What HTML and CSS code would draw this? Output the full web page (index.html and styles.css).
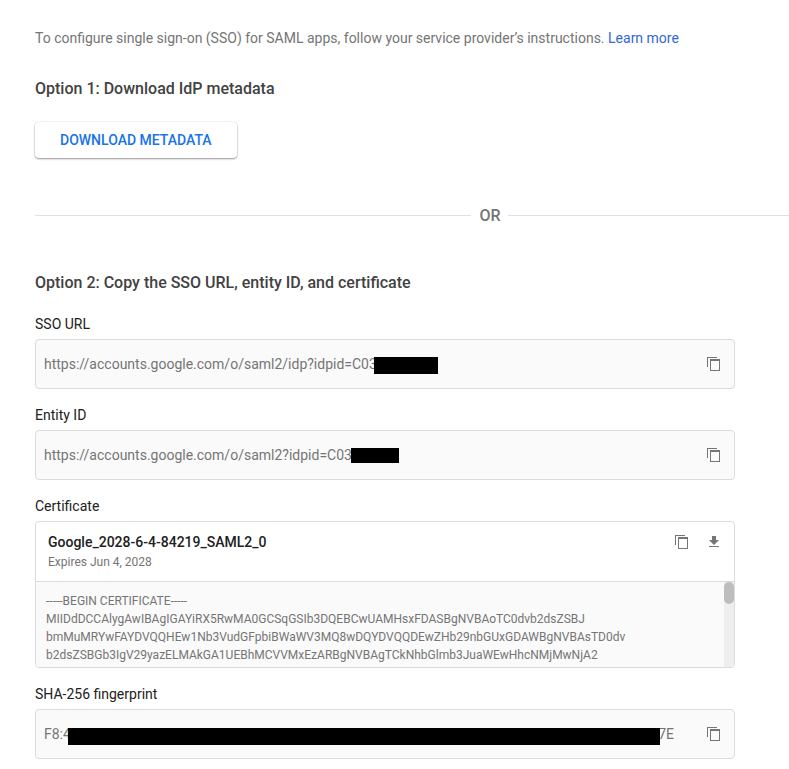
FILE: index.html
```html
<!DOCTYPE html>
<html lang="en">
<head>
<meta charset="utf-8">
<meta name="viewport" content="width=device-width, initial-scale=1">
<title>Single sign-on for SAML apps</title>
<link rel="stylesheet" href="styles.css">
</head>
<body>
<svg class="sprite" aria-hidden="true">
  <symbol id="copy" viewBox="0 0 14 14">
    <path d="M0 0h10v1H1v9H0zM3 2h10v12H3zM4 4v9h8V4z" fill-rule="evenodd"/>
  </symbol>
  <symbol id="download" viewBox="0 0 14 14">
    <path d="M5 1h4v4h3L7 10 2 5h3zM2 11h10v1H2z"/>
  </symbol>
</svg>
<main class="page">
  <p class="intro">To configure single sign-on (SSO) for SAML apps, follow your service provider’s instructions. <a href="#learn">Learn more</a></p>

  <section class="option">
    <h2>Option 1: Download IdP metadata</h2>
    <button class="download" type="button">DOWNLOAD METADATA</button>
  </section>

  <div class="divider"><span>OR</span></div>

  <section class="option details">
    <h2>Option 2: Copy the SSO URL, entity ID, and certificate</h2>

    <div class="group">
      <h3>SSO URL</h3>
      <div class="field">
        <span class="value">https://accounts.google.com/o/saml2/idp?idpid=C03<span class="redacted redacted-url"></span></span>
        <button class="icon" type="button" aria-label="Copy"><svg><use href="#copy"/></svg></button>
      </div>
    </div>

    <div class="group">
      <h3>Entity ID</h3>
      <div class="field">
        <span class="value">https://accounts.google.com/o/saml2?idpid=C03<span class="redacted redacted-id"></span></span>
        <button class="icon" type="button" aria-label="Copy"><svg><use href="#copy"/></svg></button>
      </div>
    </div>

    <div class="group">
      <h3>Certificate</h3>
      <div class="certificate">
        <div class="cert-head">
          <div class="cert-info">
            <div class="cert-name">Google_2028-6-4-84219_SAML2_0</div>
            <div class="cert-expiry">Expires Jun 4, 2028</div>
          </div>
          <button class="icon" type="button" aria-label="Copy"><svg><use href="#copy"/></svg></button>
          <button class="icon" type="button" aria-label="Download"><svg><use href="#download"/></svg></button>
        </div>
        <div class="cert-body">
          <div class="cert-text">-----BEGIN CERTIFICATE-----<br>MIIDdDCCAlygAwIBAgIGAYiRX5RwMA0GCSqGSIb3DQEBCwUAMHsxFDASBgNVBAoTC0dvb2dsZSBJ<br>bmMuMRYwFAYDVQQHEw1Nb3VudGFpbiBWaWV3MQ8wDQYDVQQDEwZHb29nbGUxGDAWBgNVBAsTD0dv<br>b2dsZSBGb3IgV29yazELMAkGA1UEBhMCVVMxEzARBgNVBAgTCkNhbGlmb3JuaWEwHhcNMjMwNjA2</div>
          <div class="track"><div class="thumb"></div></div>
        </div>
      </div>
    </div>

    <div class="group">
      <h3>SHA-256 fingerprint</h3>
      <div class="field">
        <span class="value fingerprint">F8:4<span class="redacted redacted-sha"></span>7E</span>
        <button class="icon" type="button" aria-label="Copy"><svg><use href="#copy"/></svg></button>
      </div>
    </div>
  </section>
</main>
</body>
</html>
```
FILE: styles.css
```css
* {
  box-sizing: border-box;
}

body {
  margin: 0;
  background: #fff;
  color: #757575;
  font: 14px/20px Roboto, "Liberation Sans", sans-serif;
}

.sprite {
  display: none;
}

.page {
  padding: 28px 0 10px 35px;
}

.intro {
  margin: 0 0 29px;
}

a {
  color: #3367d6;
  text-decoration: none;
}

h2 {
  margin: 0;
  color: #424242;
  font-size: 16px;
  font-weight: 500;
  line-height: 24px;
}

h3 {
  margin: 0 0 5px;
  color: #212121;
  font-size: 14px;
  font-weight: 400;
  line-height: 20px;
}

.download {
  display: block;
  height: 36px;
  margin-top: 21px;
  padding: 0 25px;
  border: 0;
  border-radius: 4px;
  background: #fff;
  box-shadow: 0 1px 2px rgba(0, 0, 0, 0.4), 0 0 2px rgba(0, 0, 0, 0.12);
  color: #1a73e8;
  font: 500 14px/36px Roboto, "Liberation Sans", sans-serif;
}

.divider {
  display: flex;
  align-items: center;
  gap: 8px;
  margin: 46px 0 43px;
  font-size: 16px;
  font-weight: 500;
  line-height: 24px;
}

.divider::before,
.divider::after {
  content: "";
  height: 1px;
  margin-bottom: 2px;
  background: #e0e0e0;
}

.divider::before {
  flex: 14 1 0;
}

.divider::after {
  flex: 9 1 0;
}

.details {
  max-width: 700px;
  margin-right: 54px;
}

.details h2 {
  margin-bottom: 19px;
}

.group + .group {
  margin-top: 16px;
}

.field {
  display: flex;
  align-items: center;
  justify-content: space-between;
  height: 50px;
  padding: 0 8px;
  border: 1px solid #dadce0;
  border-radius: 4px;
  background: #fafafa;
}

.value {
  display: flex;
  align-items: center;
}

/* Bars overlap the edge of the characters beside them. */
.redacted {
  position: relative;
  height: 17px;
  background: #000;
}

.redacted-url {
  width: 64px;
  margin: 2px 0 0 -3px;
}

.redacted-id {
  width: 48px;
  height: 15px;
  margin-left: -1px;
}

.redacted-sha {
  flex: 1;
  margin: 4px -2px 0 -3px;
}

.fingerprint {
  flex: 0 1 630px;
}

.icon {
  display: flex;
  align-items: center;
  justify-content: center;
  width: 24px;
  height: 20px;
  padding: 0;
  border: 0;
  background: none;
  color: #757575;
}

.icon svg {
  width: 14px;
  height: 14px;
  fill: currentColor;
}

.certificate {
  overflow: hidden;
  border: 1px solid #dadce0;
  border-radius: 4px;
}

.cert-head {
  display: flex;
  gap: 8px;
  padding: 10px 8px 9px 12px;
  border-bottom: 1px solid #dadce0;
}

.cert-info {
  flex: 1;
}

.cert-name {
  color: #212121;
  font-weight: 500;
}

.cert-expiry {
  font-size: 12px;
}

.cert-body {
  display: flex;
  height: 85px;
  background: #fafafa;
}

.cert-text {
  flex: 1;
  padding: 10px;
  font-size: 12px;
  line-height: 18px;
}

.track {
  width: 10px;
  background: #eee;
}

.thumb {
  height: 22px;
  border-radius: 5px;
  background: #bdbdbd;
}
```
